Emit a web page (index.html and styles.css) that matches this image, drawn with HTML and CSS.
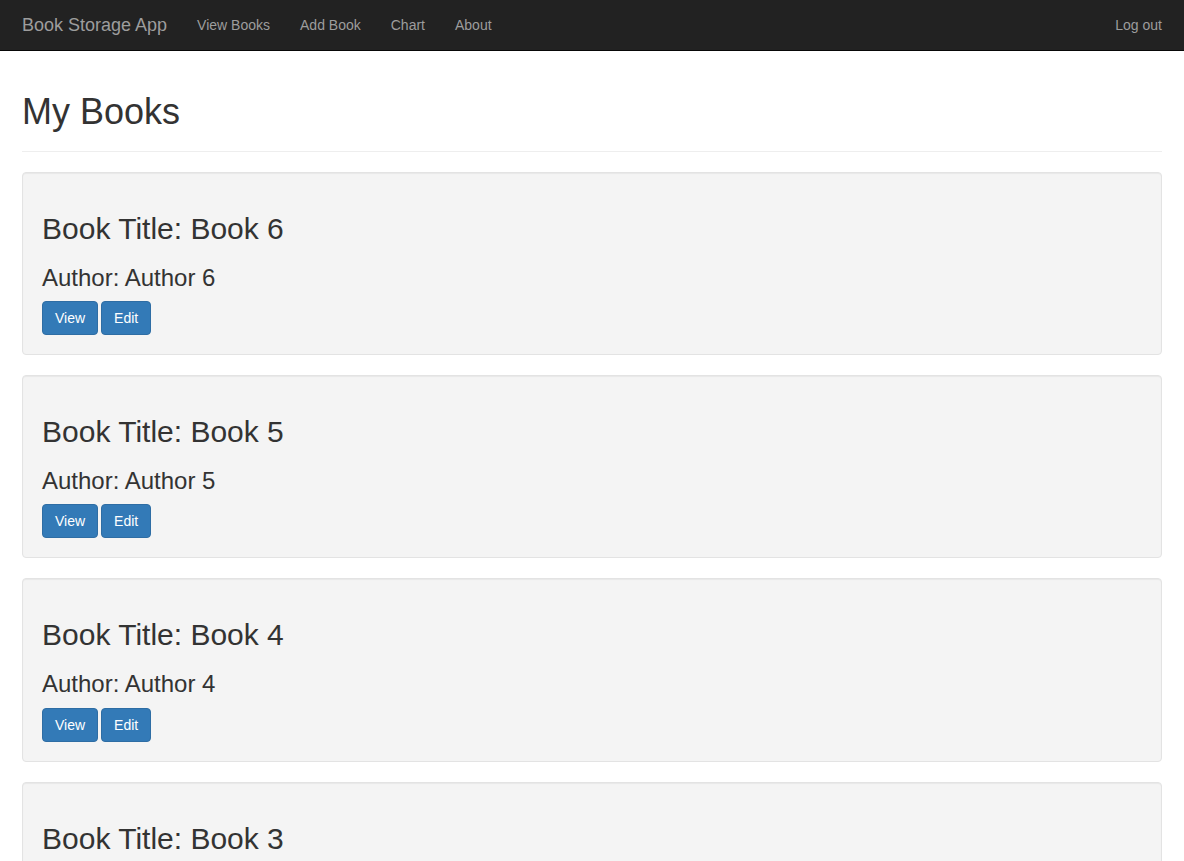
FILE: index.html
```html
<!DOCTYPE html>
<html lang="en">
<head>
<meta charset="utf-8">
<title>Book Storage App</title>
<link rel="stylesheet" href="styles.css">
</head>
<body>
<nav class="navbar">
  <div class="nav-inner">
    <div class="nav-left">
      <a class="brand" href="#">Book Storage App</a>
      <a class="nav-link" href="#">View Books</a>
      <a class="nav-link" href="#">Add Book</a>
      <a class="nav-link" href="#">Chart</a>
      <a class="nav-link" href="#">About</a>
    </div>
    <div class="nav-right">
      <a class="nav-link" href="#">Log out</a>
    </div>
  </div>
</nav>
<main class="container">
  <div class="page-header"><h1>My Books</h1></div>
  <div class="well">
    <h2>Book Title: Book 6</h2>
    <h3>Author: Author 6</h3>
    <div class="actions"><a class="btn" href="#">View</a><a class="btn" href="#">Edit</a></div>
  </div>
  <div class="well">
    <h2>Book Title: Book 5</h2>
    <h3>Author: Author 5</h3>
    <div class="actions"><a class="btn" href="#">View</a><a class="btn" href="#">Edit</a></div>
  </div>
  <div class="well">
    <h2>Book Title: Book 4</h2>
    <h3>Author: Author 4</h3>
    <div class="actions"><a class="btn" href="#">View</a><a class="btn" href="#">Edit</a></div>
  </div>
  <div class="well">
    <h2>Book Title: Book 3</h2>
    <h3>Author: Author 3</h3>
    <div class="actions"><a class="btn" href="#">View</a><a class="btn" href="#">Edit</a></div>
  </div>
  <div class="well">
    <h2>Book Title: Book 2</h2>
    <h3>Author: Author 2</h3>
    <div class="actions"><a class="btn" href="#">View</a><a class="btn" href="#">Edit</a></div>
  </div>
  <div class="well">
    <h2>Book Title: Book 1</h2>
    <h3>Author: Author 1</h3>
    <div class="actions"><a class="btn" href="#">View</a><a class="btn" href="#">Edit</a></div>
  </div>
</main>
</body>
</html>
```
FILE: styles.css
```css
* { box-sizing: border-box; }
html, body { margin: 0; padding: 0; }
body {
  font-family: "Liberation Sans", Arial, Helvetica, sans-serif;
  font-size: 14px;
  line-height: 1.42857;
  color: #333;
  background: #fff;
}
a { text-decoration: none; }

.navbar {
  background: #222;
  border-bottom: 1px solid #080808;
  height: 51px;
}
.nav-inner {
  display: flex;
  justify-content: space-between;
  padding: 0 7px;
  height: 50px;
}
.nav-left, .nav-right { display: flex; }
.brand {
  font-size: 18px;
  line-height: 20px;
  padding: 15px;
  color: #9d9d9d;
}
.nav-link {
  font-size: 14px;
  line-height: 20px;
  padding: 15px;
  color: #9d9d9d;
}

.container {
  padding: 41px 22px 0;
}
.page-header {
  padding-bottom: 19px;
  border-bottom: 1px solid #eee;
  margin-bottom: 20px;
}
.page-header h1 {
  margin: 0;
  font-size: 36px;
  font-weight: 500;
  line-height: 1.1;
}
.well {
  background: #f4f4f4;
  border: 1px solid #e3e3e3;
  border-radius: 4px;
  box-shadow: inset 0 1px 1px rgba(0,0,0,.05);
  padding: 19px;
  margin-bottom: 20px;
}
.well h2 {
  margin: 20px 0 20px;
  font-size: 30px;
  font-weight: 500;
  line-height: 1.1;
}
.well h3 {
  margin: 0 0 10px;
  font-size: 24px;
  font-weight: 500;
  line-height: 1.1;
}
.actions {
  display: flex;
  gap: 3px;
}
.btn {
  display: inline-block;
  padding: 6px 12px;
  font-size: 14px;
  line-height: 20px;
  color: #fff;
  background: #337ab7;
  border: 1px solid #2e6da4;
  border-radius: 4px;
}
```
